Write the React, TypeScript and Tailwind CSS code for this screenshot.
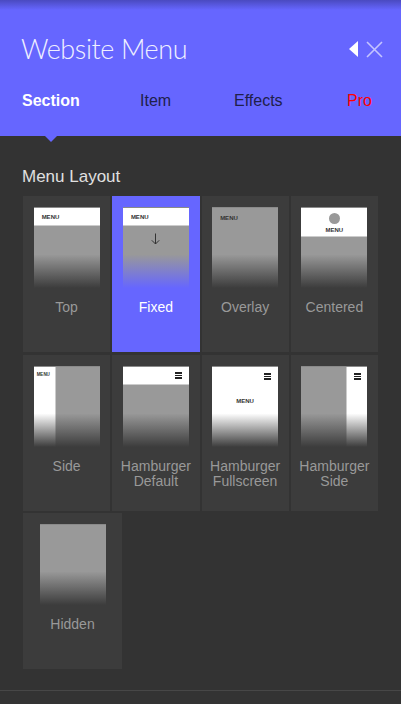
type Kind =
  | "top"
  | "fixed"
  | "overlay"
  | "centered"
  | "side"
  | "hamDefault"
  | "hamFull"
  | "hamSide"
  | "hidden";

const layouts: { kind: Kind; label: string[] }[] = [
  { kind: "top", label: ["Top"] },
  { kind: "fixed", label: ["Fixed"] },
  { kind: "overlay", label: ["Overlay"] },
  { kind: "centered", label: ["Centered"] },
  { kind: "side", label: ["Side"] },
  { kind: "hamDefault", label: ["Hamburger", "Default"] },
  { kind: "hamFull", label: ["Hamburger", "Fullscreen"] },
  { kind: "hamSide", label: ["Hamburger", "Side"] },
];

function MenuWord({ small = false, className = "" }: { small?: boolean; className?: string }) {
  return (
    <span
      className={`${small ? "text-[4.5px]" : "text-[6px]"} leading-none font-bold text-[#333] ${className}`}
    >
      MENU
    </span>
  );
}

function Burger() {
  return (
    <span className="flex flex-col gap-[1px] w-[7px]">
      <span className="h-[1.5px] bg-[#222]" />
      <span className="h-[1.5px] bg-[#222]" />
      <span className="h-[1.5px] bg-[#222]" />
    </span>
  );
}

function Thumb({ kind, active }: { kind: Kind; active: boolean }) {
  let inner = null;
  if (kind === "top" || kind === "fixed") {
    inner = (
      <div className="flex flex-col h-full">
        <div className="h-[18px] bg-white border-b border-[#ccc] flex items-center pl-[8px]">
          <MenuWord />
        </div>
        {kind === "fixed" && (
          <div className="flex justify-center pt-[7px]">
            <svg width="9" height="12" viewBox="0 0 9 12" className="text-[#333]">
              <path d="M4.5 0.5V11M0.8 7.3L4.5 11L8.2 7.3" stroke="currentColor" strokeWidth="1" fill="none" />
            </svg>
          </div>
        )}
      </div>
    );
  } else if (kind === "overlay") {
    inner = (
      <div className="pl-[8px] pt-[7px] flex">
        <MenuWord />
      </div>
    );
  } else if (kind === "centered") {
    inner = (
      <div className="h-[29px] bg-white border-b border-[#ccc] flex flex-col items-center pt-[5px] gap-[3px]">
        <span className="w-[11px] h-[11px] rounded-full bg-[#999]" />
        <MenuWord />
      </div>
    );
  } else if (kind === "side") {
    inner = (
      <div className="h-full w-[22px] bg-white border-r border-[#ccc] pl-[3px] pt-[6px] flex items-start">
        <MenuWord small />
      </div>
    );
  } else if (kind === "hamDefault") {
    inner = (
      <div className="h-[18px] bg-white border-b border-[#ccc] flex items-center justify-end pr-[7px]">
        <Burger />
      </div>
    );
  } else if (kind === "hamFull") {
    inner = (
      <div className="h-full bg-white flex flex-col items-center">
        <div className="self-end pr-[7px] pt-[6px]">
          <Burger />
        </div>
        <MenuWord className="mt-[18px]" />
      </div>
    );
  } else if (kind === "hamSide") {
    inner = (
      <div className="h-full flex justify-end">
        <div className="w-[21px] h-full bg-white border-l border-[#ccc] flex justify-center pt-[6px]">
          <Burger />
        </div>
      </div>
    );
  }
  return (
    <div className="relative w-[66px] h-[81px] bg-[#999] border-t border-[#8a8a8a] overflow-hidden">
      {inner}
      <div
        className={
          active
            ? "absolute inset-0 bg-[linear-gradient(to_bottom,transparent_58%,#6666ff)]"
            : "absolute inset-0 bg-[linear-gradient(to_bottom,transparent_58%,#3c3c3c)]"
        }
      />
    </div>
  );
}

function Card({ kind, label, active = false, wide = false }: { kind: Kind; label: string[]; active?: boolean; wide?: boolean }) {
  return (
    <div
      className={`${active ? "bg-[#6666ff]" : "bg-[#3c3c3c]"} ${wide ? "w-[99px]" : ""} h-[156px] flex flex-col items-center pt-[11px]`}
    >
      <Thumb kind={kind} active={active} />
      <div
        className={`mt-[12px] text-[14px] leading-[15px] text-center ${active ? "text-white" : "text-[#999]"}`}
      >
        {label.map((l) => (
          <div key={l}>{l}</div>
        ))}
      </div>
    </div>
  );
}

export default function App() {
  return (
    <div className="w-[401px] h-[704px] bg-[#333333] overflow-hidden font-['Liberation_Sans',Arial,sans-serif]">
      {/* Header */}
      <div className="relative h-[136px] bg-[#6666ff]">
        <div className="absolute inset-x-0 top-0 h-[10px] bg-[linear-gradient(to_bottom,#4a4ac0,#6666ff)]" />
        <div className="relative flex items-center justify-between pl-[21px] pr-[18px] pt-[31px]">
          <h1 className="font-['Lato',sans-serif] font-light text-[27px] leading-[36px] tracking-[-0.015em] text-[#f0f0ff]">
            Website Menu
          </h1>
          <div className="flex items-center gap-[8px]">
            <span className="w-0 h-0 border-y-[8px] border-y-transparent border-r-[9px] border-r-white" />
            <svg width="17" height="17" viewBox="0 0 17 17" className="text-[#c4c4ff]">
              <path d="M1 1L16 16M16 1L1 16" stroke="currentColor" strokeWidth="1.6" />
            </svg>
          </div>
        </div>
        <div className="flex pl-[22px] mt-[24px] text-[16px] leading-[20px]">
          <span className="w-[118px] font-bold text-white">Section</span>
          <span className="w-[94px] text-[#20204a]">Item</span>
          <span className="w-[113px] text-[#20204a]">Effects</span>
          <span className="text-[#ff0000]">Pro</span>
        </div>
        <span className="absolute left-[45px] -bottom-[6px] w-0 h-0 border-x-[6px] border-x-transparent border-t-[6px] border-t-[#6666ff]" />
      </div>

      {/* Body */}
      <div className="px-[23px] pt-[31px]">
        <h2 className="text-[17px] leading-[20px] text-[#e0e0e0] -ml-[1px]">Menu Layout</h2>
        <div className="mt-[9px] grid grid-cols-4 gap-x-[2px] gap-y-[3px]">
          {layouts.map((l) => (
            <Card key={l.kind} kind={l.kind} label={l.label} active={l.kind === "fixed"} />
          ))}
        </div>
        <div className="mt-[2px] flex">
          <Card kind="hidden" label={["Hidden"]} wide />
        </div>
      </div>
      <div className="mt-[21px] border-t border-[#474747]" />
    </div>
  );
}
